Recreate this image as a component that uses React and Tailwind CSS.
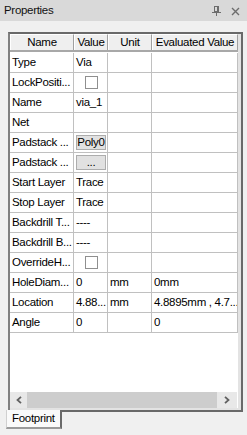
// Properties panel (docked tool window with property grid)
const W = ['w-[64px]', 'w-[34px]', 'w-[44px]', 'w-[86px]'];

const rows = [
  { name: 'Type', value: 'Via' },
  { name: 'LockPositi...', check: true },
  { name: 'Name', value: 'via_1' },
  { name: 'Net' },
  { name: 'Padstack ...', button: 'Poly0' },
  { name: 'Padstack ...', button: '...' },
  { name: 'Start Layer', value: 'Trace' },
  { name: 'Stop Layer', value: 'Trace' },
  { name: 'Backdrill T...', value: '----' },
  { name: 'Backdrill B...', value: '----' },
  { name: 'OverrideH...', check: true },
  { name: 'HoleDiam...', value: '0', unit: 'mm', evald: '0mm' },
  { name: 'Location', value: '4.88...', unit: 'mm', evald: '4.8895mm , 4.7...' },
  { name: 'Angle', value: '0', evald: '0' },
];

function Cell({ w, children, center }) {
  return (
    <div
      className={`${w} shrink-0 h-full border-r border-[#c0c0c0] pl-[2px] overflow-hidden whitespace-nowrap flex items-center ${
        center ? 'justify-center pl-0' : ''
      }`}
    >
      {children}
    </div>
  );
}

function CheckBox() {
  return <div className="w-[13px] h-[13px] bg-white border border-[#8f8f8f]" />;
}

function GridButton({ label }) {
  return (
    <div className="w-[30px] h-[15px] bg-[#e1e1e1] border border-[#adadad] flex items-center justify-center leading-none text-black">
      {label}
    </div>
  );
}

function HeadCell({ w, children }) {
  return (
    <div className={`${w} shrink-0 h-full bg-[#efefef] border-t border-l border-t-white border-l-white border-r border-r-[#a0a0a0] flex items-center justify-center whitespace-nowrap overflow-hidden`}>
      {children}
    </div>
  );
}

function PinIcon() {
  return (
    <svg width="9" height="10" viewBox="0 0 9 10" className="text-[#6d6d6d]">
      <rect x="2.5" y="0.5" width="4" height="5" fill="none" stroke="currentColor" />
      <rect x="5" y="1" width="1" height="4" fill="currentColor" />
      <line x1="0" y1="6.5" x2="9" y2="6.5" stroke="currentColor" />
      <line x1="4.5" y1="7" x2="4.5" y2="10" stroke="currentColor" />
    </svg>
  );
}

function CloseIcon() {
  return (
    <svg width="9" height="9" viewBox="0 0 9 9" className="text-[#6d6d6d]">
      <path d="M1 1 L8 8 M8 1 L1 8" stroke="currentColor" strokeWidth="1.4" />
    </svg>
  );
}

export default function App() {
  return (
    <div className="w-[247px] h-[435px] bg-[#f0f0f0] flex flex-col font-['Liberation_Sans',Arial,sans-serif] text-[11.5px] tracking-[-0.3px] text-black overflow-hidden">
      {/* タイトルバー */}
      <div className="h-[21px] shrink-0 bg-[#d9d9d9] flex items-center pl-[4px] pr-[7px]">
        <span className="flex-1 text-[#111]">Properties</span>
        <div className="flex items-center gap-[10px] pt-[1px]">
          <PinIcon />
          <CloseIcon />
        </div>
      </div>

      {/* パネル本体 */}
      <div className="mt-[11px] ml-[8px] w-[235px] h-[380px] shrink-0 flex flex-col border-2 border-[#696969] border-l-[#808080]">
        <div className="flex-1 flex flex-col border-r-[3px] border-b-2 border-[#e3e3e3] bg-white min-h-0">
          {/* ヘッダー */}
          <div className="h-[18px] shrink-0 flex border-b-2 border-[#a8a8a8]">
            <HeadCell w={W[0]}>Name</HeadCell>
            <HeadCell w={W[1]}>Value</HeadCell>
            <HeadCell w={W[2]}>Unit</HeadCell>
            <HeadCell w={W[3]}>Evaluated Value</HeadCell>
          </div>

          {/* 行 */}
          <div className="pt-[1px] flex flex-col">
            {rows.map((r, i) => (
              <div key={i} className="h-[20px] flex border-b border-[#c0c0c0]">
                <Cell w={W[0]}>{r.name}</Cell>
                <Cell w={W[1]} center={r.check}>
                  {r.check ? <CheckBox /> : r.button ? <GridButton label={r.button} /> : r.value}
                </Cell>
                <Cell w={W[2]}>{r.unit}</Cell>
                <Cell w={W[3]}>{r.evald}</Cell>
              </div>
            ))}
          </div>

          <div className="flex-1" />

          {/* 横スクロールバー */}
          <div className="h-[16px] shrink-0 w-[227px] bg-[#e8e8e8] flex items-center">
            <div className="w-[17px] flex justify-center">
              <svg width="6" height="8" viewBox="0 0 6 8">
                <polyline points="5,0.8 1.5,4 5,7.2" fill="none" stroke="#606060" strokeWidth="1.8" />
              </svg>
            </div>
            <div className="h-full w-[190px] bg-[#cdcdcd]" />
            <div className="flex-1 flex justify-center">
              <svg width="6" height="8" viewBox="0 0 6 8">
                <polyline points="1,0.8 4.5,4 1,7.2" fill="none" stroke="#606060" strokeWidth="1.8" />
              </svg>
            </div>
          </div>
        </div>
      </div>

      {/* タブ */}
      <div className="ml-[6px] mt-[-2px] w-[56px] h-[19px] shrink-0 relative bg-[#fafafa] border-l border-l-[#d0d0d0] border-r-2 border-r-[#696969] border-b-2 border-b-[#9a9a9a] flex items-center pl-[5px]">
        Footprint
      </div>
    </div>
  );
}
